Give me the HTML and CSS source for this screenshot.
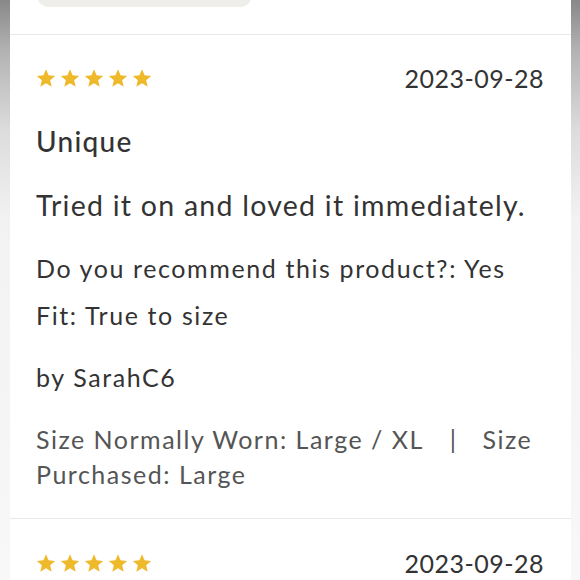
FILE: index.html
```html
<!DOCTYPE html>
<html lang="en">
<head>
<meta charset="utf-8">
<title>Reviews</title>
<link rel="stylesheet" href="styles.css">
</head>
<body>
<div class="page">
  <div class="edge edge-left"></div>
  <main class="card">
    <div class="pill-wrap"><div class="pill"></div></div>
    <article class="review">
      <div class="review-head">
        <div class="stars">
          <svg viewBox="0 0 24 24"><path d="M12 1.5l3.1 7.3 7.9.7-6 5.2 1.8 7.8L12 18.4l-6.8 4.1L7 14.7 1 9.5l7.9-.7z"/></svg>
          <svg viewBox="0 0 24 24"><path d="M12 1.5l3.1 7.3 7.9.7-6 5.2 1.8 7.8L12 18.4l-6.8 4.1L7 14.7 1 9.5l7.9-.7z"/></svg>
          <svg viewBox="0 0 24 24"><path d="M12 1.5l3.1 7.3 7.9.7-6 5.2 1.8 7.8L12 18.4l-6.8 4.1L7 14.7 1 9.5l7.9-.7z"/></svg>
          <svg viewBox="0 0 24 24"><path d="M12 1.5l3.1 7.3 7.9.7-6 5.2 1.8 7.8L12 18.4l-6.8 4.1L7 14.7 1 9.5l7.9-.7z"/></svg>
          <svg viewBox="0 0 24 24"><path d="M12 1.5l3.1 7.3 7.9.7-6 5.2 1.8 7.8L12 18.4l-6.8 4.1L7 14.7 1 9.5l7.9-.7z"/></svg>
        </div>
        <span class="date">2023-09-28</span>
      </div>
      <h3 class="title">Unique</h3>
      <p class="body">Tried it on and loved it immediately.</p>
      <p class="meta meta-first">Do you recommend this product?: Yes</p>
      <p class="meta meta-fit">Fit: True to size</p>
      <p class="meta meta-author">by SarahC6</p>
      <p class="sizes"><span>Size Normally Worn: Large / XL</span><span class="sep">|</span><span>Size</span> <span>Purchased: Large</span></p>
    </article>
    <article class="review review-next">
      <div class="review-head">
        <div class="stars">
          <svg viewBox="0 0 24 24"><path d="M12 1.5l3.1 7.3 7.9.7-6 5.2 1.8 7.8L12 18.4l-6.8 4.1L7 14.7 1 9.5l7.9-.7z"/></svg>
          <svg viewBox="0 0 24 24"><path d="M12 1.5l3.1 7.3 7.9.7-6 5.2 1.8 7.8L12 18.4l-6.8 4.1L7 14.7 1 9.5l7.9-.7z"/></svg>
          <svg viewBox="0 0 24 24"><path d="M12 1.5l3.1 7.3 7.9.7-6 5.2 1.8 7.8L12 18.4l-6.8 4.1L7 14.7 1 9.5l7.9-.7z"/></svg>
          <svg viewBox="0 0 24 24"><path d="M12 1.5l3.1 7.3 7.9.7-6 5.2 1.8 7.8L12 18.4l-6.8 4.1L7 14.7 1 9.5l7.9-.7z"/></svg>
          <svg viewBox="0 0 24 24"><path d="M12 1.5l3.1 7.3 7.9.7-6 5.2 1.8 7.8L12 18.4l-6.8 4.1L7 14.7 1 9.5l7.9-.7z"/></svg>
        </div>
        <span class="date">2023-09-28</span>
      </div>
    </article>
  </main>
  <div class="edge edge-right"></div>
</div>
</body>
</html>
```
FILE: styles.css
```css
html, body {
  margin: 0;
  padding: 0;
  height: 100%;
  overflow: hidden;
  background: #ffffff;
}
body {
  font-family: Lato, "Noto Sans", "Liberation Sans", sans-serif;
  color: #333333;
}
.page {
  display: flex;
  height: 580px;
}
.edge {
  height: 100%;
}
.edge-left {
  width: 10px;
  background: linear-gradient(#888888 0px, #b2b2b2 50px, #dcdcdc 130px, #f2f2f2 220px, #f8f8f8 580px);
}
.edge-right {
  width: 9px;
  background: linear-gradient(#888888 0px, #b2b2b2 50px, #dcdcdc 130px, #f2f2f2 220px, #f8f8f8 580px);
}
.card {
  flex: 1;
  background: #ffffff;
  overflow: hidden;
}
.pill-wrap {
  height: 7px;
  margin-bottom: 27px;
  padding-left: 27px;
  display: flex;
  align-items: flex-end;
  overflow: hidden;
}
.pill {
  width: 215px;
  height: 24px;
  flex: none;
  background: #efeeea;
  border-radius: 12px;
}
.review {
  border-top: 1px solid #e8e8e8;
  padding: 28px 27px 26px 26px;
}
.review-next {
  padding-top: 29px;
}
.review-head {
  display: flex;
  justify-content: space-between;
  align-items: center;
  height: 30px;
}
.stars {
  display: flex;
  gap: 4px;
}
.stars svg {
  width: 20px;
  height: 20px;
  fill: #efb92c;
}
.date {
  font-size: 25px;
  color: #333333;
  letter-spacing: 0.5px;
}
.title {
  margin: 31px 0 0;
  font-size: 28px;
  line-height: 34px;
  font-weight: 500;
  letter-spacing: 1.3px;
  color: #333333;
}
.body {
  margin: 29px 0 0;
  font-size: 28.5px;
  line-height: 36px;
  letter-spacing: 1.25px;
  color: #333333;
}
.meta {
  font-size: 25px;
  line-height: 32px;
  letter-spacing: 1.6px;
  color: #333333;
  margin: 0;
}
.meta-first { margin-top: 29px; }
.meta-fit { margin-top: 15px; }
.meta-author { margin-top: 30px; }
.sizes {
  margin: 29px 0 0;
  font-size: 25px;
  line-height: 35px;
  letter-spacing: 1.5px;
  color: #555555;
}
.sep {
  margin: 0 25px 0 26px;
}
```
